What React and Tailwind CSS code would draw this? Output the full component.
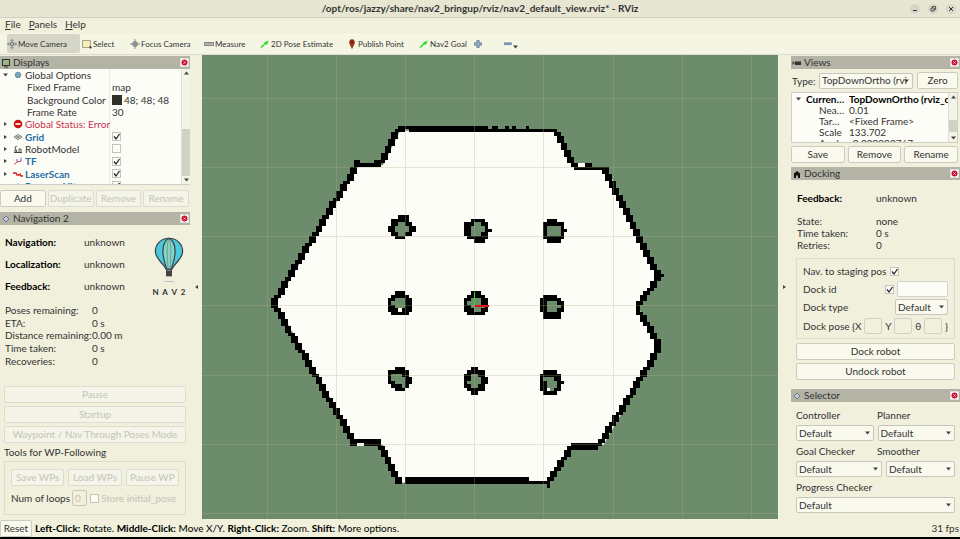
import React, { useState } from 'react'

// Occupancy grid: one cell is 0.05 m
const CELL = 3.45;
const MAP_X = 270.7;
const MAP_Y = 125.5;

// Wall runs: [col1, row1, col2, row2, width in cells]
const walls = [
  [37, 0, 62, 0, 1], [64, 0, 65, 0, 1], [68, 0, 68, 0, 1], [70, 0, 70, 0, 1], [74, 0, 74, 0, 1],
  [36, 1, 38, 1, 1], [40, 1, 82, 1, 1],
  [36, 1, 31, 10, 2], [30, 10, 31, 10, 1], [25, 11, 31, 11, 1], [24, 10, 25, 10, 1],
  [24, 11, 1, 49, 2], [0, 50, 0, 52, 2], [1, 53, 23, 91, 2],
  [23, 91, 31, 91, 1], [23, 92, 24, 92, 1], [27, 92, 31, 92, 1],
  [31, 93, 36, 102, 2], [36, 103, 37, 103, 1],
  [39, 102, 74, 102, 1], [39, 103, 80, 103, 1], [80, 102, 80, 104, 1],
  [80, 102, 86, 93, 2], [87, 92, 95, 92, 1], [86, 93, 94, 93, 1],
  [95, 91, 111, 65, 2], [111, 62, 111, 64, 2],
  [106, 54, 111, 62, 2], [106, 51, 106, 53, 1], [106, 51, 111, 44, 2],
  [111, 42, 111, 44, 2], [113, 43, 113, 43, 1],
  [96, 13, 111, 42, 2], [88, 12, 97, 12, 1], [91, 11, 92, 11, 1],
  [82, 2, 87, 11, 2],
];

const freeOutline = [
  [37, 1], [82, 1], [88, 12], [97, 12], [112, 43], [106, 52], [112, 64], [96, 92], [87, 93],
  [80, 103], [37, 103], [32, 92], [24, 91], [1, 51], [25, 11], [32, 11],
];

const freeSpots = [[35, 3], [35, 4], [89, 11], [90, 11], [25, 92], [26, 92], [108, 56]];

// '#' occupied, '.' unknown, ' ' free
const pillars = [
  { col: 34, row: 26, cells: ["   ###  ", " #####  ", " ##..## ", "##....##", "##....##", " ##..## ", "  ###   "] },
  { col: 56, row: 27, cells: ["  ####  ", "###..## ", "##....# ", "##....##", "##...## ", " ###### ", "   ###  "] },
  { col: 79, row: 27, cells: [" ###   ", "###### ", "#....# ", "#....##", "#....# ", "###### ", " ####  "] },
  { col: 34, row: 48, cells: ["  ###  ", " ##### ", "##...##", "#....##", "##...##", "### ###", " ##### "] },
  { col: 56, row: 48, cells: ["  ###  ", " ##### ", "##...##", "#....##", "##....#", "###..##", " ##### "] },
  { col: 78, row: 49, cells: [" ####  ", "###### ", "##...##", "##....#", "##...##", " ##### ", " ##### "] },
  { col: 34, row: 70, cells: ["  ###  ", "###### ", "#...## ", "#....##", "##...##", " ###.# ", "  ###  "] },
  { col: 56, row: 70, cells: ["  ##   ", " ##### ", "##..## ", "##...##", "#....##", "##..## ", " ##### ", "  ##   "] },
  { col: 78, row: 71, cells: [" ####  ", "###### ", "#...## ", "##...##", "##...# ", "## .## ", " ####  "] },
];

const wallCells = walls.flatMap(([x1, y1, x2, y2, w]) => {
  const steps = Math.max(Math.abs(x2 - x1), Math.abs(y2 - y1));
  return Array.from({ length: steps + 1 }, (_, i) => {
    const t = steps ? i / steps : 0;
    return { col: Math.round(x1 + (x2 - x1) * t), row: Math.round(y1 + (y2 - y1) * t), w };
  });
});

const cx = (col) => MAP_X + col * CELL;
const cy = (row) => MAP_Y + row * CELL;

const MapView = () => (
  <svg viewBox="202 55 576 464" preserveAspectRatio="xMidYMid slice" className="block h-full w-full bg-[#6d8c6c]" role="img" aria-label="Map">
    <polygon fill="#fdfdf8" points={freeOutline.map(([c, r]) => `${cx(c + 0.5)},${cy(r + 0.5)}`).join(' ')} />
    <g shapeRendering="crispEdges">
      {freeSpots.map(([c, r]) => <rect key={`${c}-${r}`} x={cx(c)} y={cy(r)} width={CELL} height={CELL} fill="#fdfdf8" />)}
      {wallCells.map((c, i) => <rect key={i} x={cx(c.col)} y={cy(c.row)} width={CELL * c.w} height={CELL} fill="#000" />)}
      {pillars.map((p, n) => p.cells.map((line, r) => line.split('').map((ch, c) => (
        ch === ' ' ? null : <rect key={`${n}-${r}-${c}`} x={cx(p.col + c)} y={cy(p.row + r)} width={CELL} height={CELL} fill={ch === '#' ? '#000' : '#6d8c6c'} />
      ))))}
    </g>
    <g stroke="#b0b080" strokeOpacity="0.3" shapeRendering="crispEdges">
      {[267, 336, 405, 474, 543, 613, 682, 751].map((x) => <line key={x} x1={x + 0.5} x2={x + 0.5} y1="55" y2="519" />)}
      {[98, 167, 236, 305, 375, 444, 513].map((y) => <line key={y} x1="202" x2="778" y1={y + 0.5} y2={y + 0.5} />)}
    </g>
    <path d="M474.5 292V305" stroke="#1fe01f" />
    <path d="M475 306H489" stroke="#e01010" strokeWidth="2" />
  </svg>
)

const Icon = ({ name }) => {
  const common = { width: 10, height: 10, viewBox: '0 0 10 10', fill: 'none', className: 'shrink-0' };
  switch (name) {
    case 'move':
      return <svg {...common} stroke="#777" ><path d="M5 0.5V9.5M0.5 5H9.5M3.5 2L5 0.5 6.5 2M3.5 8L5 9.5 6.5 8M2 3.5L0.5 5 2 6.5M8 3.5L9.5 5 8 6.5" strokeWidth=".8" /><circle cx="5" cy="5" r="1.8" fill="#bbb" /></svg>;
    case 'select':
      return <svg {...common}><rect x=".5" y="1.5" width="8" height="7" fill="#f5f0b0" stroke="#555" strokeDasharray="1 1" /><path d="M7 7l3 1-1.500 2z" fill="#222" /></svg>;
    case 'focus':
      return <svg {...common} stroke="#888"><circle cx="5" cy="5" r="2.500" fill="#aaa" /><path d="M5 0V10M0 5H10" /></svg>;
    case 'measure':
      return <svg {...common}><rect x=".5" y="3.500" width="9" height="3" fill="#bbb" stroke="#888" /><path d="M2.500 3v2M4.500 3v2M6.500 3v2" stroke="#777" strokeWidth=".6" /></svg>;
    case 'arrow':
      return <svg {...common}><path d="M1 8.500L6 4" stroke="#22dd22" strokeWidth="1.500" /><path d="M4 3.500L8.500 1.500 7 6z" fill="#22dd22" /></svg>;
    case 'pin':
      return <svg {...common}><path d="M5 9.500C4 7 2.500 5.500 2.500 3a2.500 2.500 0 0 1 5 0C7.500 5.500 6 7 5 9.500z" fill="#a33115" stroke="#6b200e" strokeWidth=".5" /><circle cx="5" cy="3" r="1" fill="#5a1608" /></svg>;
    case 'plus':
      return <svg {...common}><path d="M3.800 1.500h2.400v2.300h2.300v2.400H6.200v2.300H3.800V6.200H1.500V3.800h2.300z" fill="#8fa9bb" stroke="#5b7890" strokeWidth=".7" /></svg>;
    case 'minus':
      return <svg {...common}><rect x="1.500" y="3.800" width="7" height="2" fill="#8094b8" stroke="#60759c" strokeWidth=".5" /></svg>;
    case 'monitor':
      return <svg {...common}><rect x="1.500" y="1.500" width="7" height="6" fill="#9bb58a" stroke="#333" /><path d="M3 9h4" stroke="#333" /></svg>;
    case 'diamond':
      return <svg {...common}><path d="M5 2L8 5 5 8 2 5z" stroke="#6b7390" fill="#c5c8cc" /></svg>;
    case 'camera':
      return <svg {...common}><path d="M1 3.500v3M1 5h2" stroke="#333" /><rect x="3" y="3.500" width="6" height="3.500" fill="#333" /></svg>;
    case 'home':
      return <svg {...common}><path d="M5 2L8.500 5H8v4H6V6.500H4V9H2V5H1.500z" fill="#111" /></svg>;
    case 'options':
      return <svg {...common}><circle cx="5" cy="5" r="2.800" fill="#7fa3b5" stroke="#5f9aa5" /></svg>;
    case 'error':
      return <svg {...common}><circle cx="5" cy="5" r="4.300" fill="#cc1414" /><path d="M2.500 5h5" stroke="#fff" strokeWidth="1.600" /></svg>;
    case 'grid':
      return <svg {...common}><path d="M5 2.500L9 5 5 7.500 1 5zM3 3.700l4 2.600M7 3.700L3 6.300" stroke="#777" /></svg>;
    case 'robot':
      return <svg {...common}><path d="M1 8.500h8" stroke="#444" /><path d="M2 8V6h1.500v2M2.500 6L2 3l2-1M6 8V5h2v3" stroke="#444" strokeWidth=".9" /></svg>;
    case 'tf':
      return <svg {...common} strokeWidth=".9"><path d="M1 8.500L4 6 8.500 5" stroke="#c33" /><path d="M4 6V3M8 5V1.500" stroke="#55c" /></svg>;
    case 'laser':
      return <svg {...common}><path d="M0 4h3l1 2h2l1-1 1 2h2" stroke="#d01818" strokeWidth="1.300" /></svg>;
    case 'cloud':
      return <svg {...common}><path d="M3 5l2-3 2 3z" fill="#3aa" /></svg>;
    default:
      return null;
  }
}

const Caret = ({ dir = 'down', className = '' }) => (
  <svg width="5" height="4" viewBox="0 0 5 4" fill="#444" className={`shrink-0 ${className}`}>
    <path d={dir === 'down' ? 'M0 .5h5L2.500 3.500z' : dir === 'up' ? 'M0 3.500h5L2.500 .5z' : dir === 'left' ? 'M4 0v4L1 2z' : 'M1 0v4L4 2z'} />
  </svg>
)

const Button = ({ children, disabled, className = '' }) => (
  <button type="button" disabled={disabled} className={`h-[17px] overflow-hidden rounded-xs border pb-px text-center whitespace-nowrap ${disabled ? 'border-[#dcdcd0] bg-[#f4f4e8] text-[#c4c4b8]' : 'border-[#cbcbc0] bg-[#f9f9ee] text-[#333]'} ${className}`}>
    {children}
  </button>
)

const Select = ({ label, value, className = '' }) => (
  <span className={`relative flex h-4 items-center ${className}`}>
    <select aria-label={label} className="h-full w-full appearance-none rounded-xs border border-[#c6c6bc] bg-[#f9f9ee] pb-px pl-[2px]">
      <option>{value}</option>
    </select>
    <Caret className="pointer-events-none absolute right-1" />
  </span>
)

const Check = ({ label, on, disabled }) => {
  const [checked, setChecked] = useState(on);
  return (
    <span className="relative flex size-[9px] shrink-0">
      <input type="checkbox" aria-label={label} checked={checked} disabled={disabled} onChange={() => setChecked(!checked)} className="size-[9px] appearance-none border border-[#c4c4b8] bg-[#fdfdf8]" />
      {checked && <svg viewBox="0 0 9 9" className="pointer-events-none absolute inset-0" fill="none" stroke="#223" strokeWidth="1.300"><path d="M2 4.500L4 7 7.500 2" /></svg>}
    </span>
  )
}

const PanelTitle = ({ icon, children }) => (
  <div className="flex h-[13px] items-center bg-[#b4b4a6] pl-px">
    <Icon name={icon} />
    <h2 className="ml-[2px] flex-1 pb-[2px]">{children}</h2>
    <button type="button" aria-label={`Close ${children}`} className="mr-px flex size-[9px] items-center justify-center border border-[#ddd] bg-white">
      <svg width="7" height="7" viewBox="0 0 7 7"><circle cx="3.500" cy="3.500" r="3" fill="#c8102e" /><path d="M2.500 2.500l2 2m0-2l-2 2" stroke="#fff" strokeWidth=".8" /></svg>
    </button>
  </div>
)

const ScrollBar = ({ thumb }) => (
  <div className="flex w-[9px] shrink-0 flex-col items-center justify-between border-l border-[#e0e0d6] bg-[#f3f3e8] py-[2px]">
    <Caret dir="up" />
    <div className={`w-full bg-[#d2d2c4] ${thumb}`}></div>
    <Caret />
  </div>
)

const displays = [
  { icon: 'options', name: 'Global Options', arrow: 'down' },
  { name: 'Fixed Frame', value: 'map' },
  { name: 'Background Color', value: '48; 48; 48', swatch: true },
  { name: 'Frame Rate', value: '30' },
  { icon: 'error', name: 'Global Status: Error', arrow: 'right', style: 'text-[#c8324a]' },
  { icon: 'grid', name: 'Grid', arrow: 'right', style: 'font-bold text-[#256fa5]', check: true },
  { icon: 'robot', name: 'RobotModel', arrow: 'right', check: false },
  { icon: 'tf', name: 'TF', arrow: 'right', style: 'font-bold text-[#256fa5]', check: true },
  { icon: 'laser', name: 'LaserScan', arrow: 'right', style: 'font-bold text-[#256fa5]', check: true },
  { icon: 'cloud', name: 'Bumper Hit', arrow: 'right', style: 'font-bold text-[#256fa5]', check: true },
];

const DisplaysPanel = () => (
  <section>
    <PanelTitle icon="monitor">Displays</PanelTitle>
    <div className="flex h-[116px] overflow-hidden border-b border-[#cfcfc4] bg-[#fdfdf8]">
      <div className="grid h-[123px] flex-1 auto-rows-fr">
        {displays.map((d) => (
          <div key={d.name} className="flex min-h-0 items-center">
            <div className="flex h-full w-[110px] items-center border-r border-[#ebebe0] whitespace-nowrap">
              {d.arrow ? <Caret dir={d.arrow} className="mr-[5px] ml-[3px]" /> : <span className="w-[27px]"></span>}
              {d.icon && <span className="mr-[2px]"><Icon name={d.icon} /></span>}
              <span className={d.style}>{d.name}</span>
            </div>
            <div className="flex items-center gap-[2px] pl-[2px]">
              {d.swatch && <span className="size-[10px] bg-[#303028]"></span>}
              {d.check !== undefined && <Check label={d.name} on={d.check} />}
              {d.value}
            </div>
          </div>
        ))}
      </div>
      <ScrollBar thumb="mt-[54px] mb-[2px] flex-1" />
    </div>
    <div className="flex gap-[2px] pt-[5px] pr-px">
      <Button className="flex-1">Add</Button>
      <Button disabled className="flex-1">Duplicate</Button>
      <Button disabled className="flex-1">Remove</Button>
      <Button disabled className="flex-1">Rename</Button>
    </div>
  </section>
)

const Balloon = () => (
  <svg width="30" height="42" viewBox="0 0 32 42" fill="none" stroke="#38434a" strokeWidth="1.300">
    <path d="M16 1C7.500 1 1.500 7.500 1.500 15c0 8 8 12 11.500 19h6c3.500-7 11.500-11 11.500-19C30.500 7.500 24.500 1 16 1z" fill="#4cc8dc" />
    <path d="M16 1c-4 2-6.500 7-6.500 14 0 8 2.500 13 4 19h5c1.500-6 4-11 4-19 0-7-2.500-12-6.500-14z" fill="#86d6c4" />
    <path d="M16 1c-1.500 3-2 8-2 14s.5 13 1 19M16 1c1.500 3 2 8 2 14s-.5 13-1 19" strokeWidth=".4" />
    <rect x="13.500" y="36" width="5" height="5" fill="#4a4038" />
    <path d="M13.500 34v3M18.500 34v3" />
  </svg>
)

const states = ['Navigation', 'Localization', 'Feedback'];
const progress = [
  ['Poses remaining:', '0'],
  ['ETA:', '0 s'],
  ['Distance remaining:', '0.00 m'],
  ['Time taken:', '0 s'],
  ['Recoveries:', '0'],
];

const NavigationPanel = () => (
  <section className="mt-[5px]">
    <PanelTitle icon="diamond">Navigation 2</PanelTitle>
    <div className="flex pt-[6px] pl-[5px]">
      <dl className="w-[145px]">
        {states.map((s) => (
          <div key={s} className="flex h-[22px] items-center">
            <dt className="w-[79px] font-bold text-black">{s}:</dt>
            <dd>unknown</dd>
          </div>
        ))}
      </dl>
      <div className="flex w-[38px] flex-col items-center pt-[5px]">
        <Balloon />
        <span className="mt-[3px] h-px w-[10px] bg-[#c0c0c4]"></span>
        <span className="mt-1 flex w-[33px] justify-between text-[8px] leading-3 font-bold"><span>N</span><span>A</span><span>V</span><span>2</span></span>
      </div>
    </div>
    <dl className="mt-[6px] grid h-[63px] auto-rows-fr pl-[5px]">
      {progress.map(([name, value]) => (
        <div key={name} className="flex items-center whitespace-nowrap">
          <dt className="w-[87px]">{name}</dt>
          <dd>{value}</dd>
        </div>
      ))}
    </dl>
    <div className="mt-[19px] flex flex-col gap-[3px] px-1">
      <Button disabled>Pause</Button>
      <Button disabled>Startup</Button>
      <Button disabled>Waypoint / Nav Through Poses Mode</Button>
      <h3 className="leading-3">Tools for WP-Following</h3>
      <div className="border border-[#dcdcd0] px-[6px] pt-[7px] pb-2">
        <div className="flex gap-1">
          <Button disabled className="flex-1">Save WPs</Button>
          <Button disabled className="flex-1">Load WPs</Button>
          <Button disabled className="flex-1">Pause WP</Button>
        </div>
        <div className="mt-1 flex items-center whitespace-nowrap">
          <label htmlFor="loops" className="w-[61px]">Num of loops</label>
          <input id="loops" disabled defaultValue="0" className="h-4 w-[15px] rounded-xs border border-[#c8c8be] pl-[2px] text-[#c4c4b8]" />
          <label className="ml-[3px] flex items-center gap-[2px] text-[#c4c4b8]">
            <Check label="Store initial_pose" on={false} disabled />
            Store initial_pose
          </label>
        </div>
      </div>
    </div>
  </section>
)

const views = [
  ['Nea…', '0.01'],
  ['Tar…', '<Fixed Frame>'],
  ['Scale', '133.702'],
  ['Angle', '-0.000000767'],
];

const ViewsPanel = () => (
  <section>
    <PanelTitle icon="camera">Views</PanelTitle>
    <div className="flex h-[23px] items-center pr-[2px] pl-px">
      <span className="w-[27px]">Type:</span>
      <Select label="Type" value="TopDownOrtho (rvi" className="mr-1 min-w-0 flex-1" />
      <Button className="w-[41px]">Zero</Button>
    </div>
    <div className="mr-[2px] flex h-[51px] overflow-hidden border border-[#cfcfc4] bg-[#fdfdf8]">
      <div className="grid h-[55px] min-w-0 flex-1 auto-rows-fr">
        <div className="flex min-h-0 items-center font-bold whitespace-nowrap text-black">
          <Caret className="mr-[5px] ml-1" />
          <span className="w-[43px]">Curren…</span>
          <span>TopDownOrtho (rviz_d.</span>
        </div>
        {views.map(([name, value]) => (
          <div key={name} className="flex min-h-0 items-center whitespace-nowrap">
            <span className="ml-[27px] w-[30px]">{name}</span>
            <span>{value}</span>
          </div>
        ))}
      </div>
      <ScrollBar thumb="mt-4 h-3" />
    </div>
    <div className="flex gap-[3px] pt-[3px] pr-[2px]">
      <Button className="flex-1">Save</Button>
      <Button className="flex-1">Remove</Button>
      <Button className="flex-1">Rename</Button>
    </div>
  </section>
)

const DockingPanel = () => (
  <section className="mt-1">
    <PanelTitle icon="home">Docking</PanelTitle>
    <dl className="px-[6px] pt-3">
      <div className="mb-[11px] flex h-3 items-center">
        <dt className="w-[79px] font-bold text-black">Feedback:</dt>
        <dd>unknown</dd>
      </div>
      {[['State:', 'none'], ['Time taken:', '0 s'], ['Retries:', '0']].map(([name, value]) => (
        <div key={name} className="flex h-3 items-center">
          <dt className="w-[79px]">{name}</dt>
          <dd>{value}</dd>
        </div>
      ))}
    </dl>
    <div className="mt-[7px] flex flex-col gap-[3px] px-[5px]">
      <div className="mb-px flex flex-col gap-[2px] border border-[#dcdcd0] px-[6px] py-1 whitespace-nowrap">
        <div className="flex h-4 items-center">
          <span className="mr-1 min-w-[78px]">Nav. to staging pos</span>
          <Check label="Nav. to staging pose" on />
        </div>
        <div className="flex h-4 items-center">
          <label htmlFor="dock-id" className="mr-1 w-[78px]">Dock id</label>
          <Check label="Use dock id" on />
          <input id="dock-id" className="ml-[3px] h-4 min-w-0 flex-1 rounded-xs border border-[#d4d4ca] bg-[#fdfdf8]" />
        </div>
        <div className="flex h-4 items-center justify-between">
          <span>Dock type</span>
          <Select label="Dock type" value="Default" className="w-[53px]" />
        </div>
        <div className="flex h-[17px] items-center justify-between">
          <span>Dock pose {'{'}X</span>
          <input aria-label="X" disabled className="h-4 w-[18px] rounded-xs border border-[#d0d0c6]" />
          <span>Y</span>
          <input aria-label="Y" disabled className="h-4 w-[18px] rounded-xs border border-[#d0d0c6]" />
          <span>θ</span>
          <input aria-label="θ" disabled className="h-4 w-[18px] rounded-xs border border-[#d0d0c6]" />
          <span>{'}'}</span>
        </div>
      </div>
      <Button>Dock robot</Button>
      <Button>Undock robot</Button>
    </div>
  </section>
)

const SelectorPanel = () => (
  <section className="mt-[9px]">
    <PanelTitle icon="diamond">Selector</PanelTitle>
    <div className="flex flex-col px-[5px] pt-[3px]">
      <div className="flex h-5 items-center">
        <span className="w-[81px]">Controller</span>
        <span>Planner</span>
      </div>
      <div className="flex gap-1">
        <Select label="Controller" value="Default" className="flex-1" />
        <Select label="Planner" value="Default" className="flex-1" />
      </div>
      <div className="flex h-5 items-center">
        <span className="w-[81px]">Goal Checker</span>
        <span>Smoother</span>
      </div>
      <div className="flex gap-1">
        <Select label="Goal Checker" value="Default" className="w-[86px]" />
        <Select label="Smoother" value="Default" className="flex-1" />
      </div>
      <span className="flex h-5 items-center">Progress Checker</span>
      <Select label="Progress Checker" value="Default" />
    </div>
  </section>
)

const tools = [
  { icon: 'move', name: 'Move Camera', width: 'w-[73px]' },
  { icon: 'select', name: 'Select', width: 'w-[46px]' },
  { icon: 'focus', name: 'Focus Camera', width: 'w-[72px]' },
  { icon: 'measure', name: 'Measure', width: 'w-[54px]' },
  { icon: 'arrow', name: '2D Pose Estimate', width: 'w-[85px]' },
  { icon: 'pin', name: 'Publish Point', width: 'w-[70px]' },
  { icon: 'arrow', name: 'Nav2 Goal', width: 'w-[54px]' },
];

const App = () => {
  return (
    <div className='flex h-screen flex-col overflow-hidden bg-[#f0f0dc] font-["Lato","Noto_Sans",sans-serif] text-[10px] leading-3 text-[#333]'>
      {/* TITLE BAR */}
      <header className="relative flex h-[18px] shrink-0 items-center justify-center border-b border-[#cfcfc4] bg-[#e6e6d2]">
        <h1 className="pb-px font-bold">/opt/ros/jazzy/share/nav2_bringup/rviz/nav2_default_view.rviz* - RViz</h1>
        <div className="absolute right-1 flex gap-2 text-[#333]">
          <button type="button" aria-label="Minimize" className="flex size-[10px] items-center justify-center rounded-full bg-[#d6d6c8]"><svg width="6" height="6" viewBox="0 0 6 6" stroke="currentColor"><path d="M1 4.500h4" /></svg></button>
          <button type="button" aria-label="Restore" className="flex size-[10px] items-center justify-center rounded-full bg-[#d6d6c8]"><svg width="6" height="6" viewBox="0 0 6 6" fill="none" stroke="currentColor" strokeWidth=".8"><path d="M1 2h3v3H1zM2.500 2V.5H5.500V3.500H4" /></svg></button>
          <button type="button" aria-label="Close" className="flex size-[10px] items-center justify-center rounded-full bg-[#d6d6c8]"><svg width="6" height="6" viewBox="0 0 6 6" stroke="currentColor"><path d="M1 1l4 4m0-4L1 5" /></svg></button>
        </div>
      </header>

      {/* MENU */}
      <nav className="flex h-[15px] shrink-0 items-start gap-2 pl-[5px]">
        {['File', 'Panels', 'Help'].map((item) => (
          <button key={item} type="button"><span className="underline">{item[0]}</span>{item.slice(1)}</button>
        ))}
      </nav>

      {/* TOOLBAR */}
      <div className="flex h-[22px] shrink-0 items-center border-b border-[#dcdcd0] bg-[#f5f5e4] pl-[7px] text-[8px]">
        <div className="flex gap-[2px]">
          {tools.map((tool, i) => (
            <button key={tool.name} type="button" className={`flex h-[19px] items-center gap-px rounded-xs whitespace-nowrap ${tool.width} ${i === 0 ? 'bg-[#d6d6c8]' : ''}`}>
              <Icon name={tool.icon} />{tool.name}
            </button>
          ))}
        </div>
        <button type="button" aria-label="Add tool"><Icon name="plus" /></button>
        <button type="button" aria-label="Remove tool" className="ml-5 flex items-end"><Icon name="minus" /><Caret /></button>
      </div>

      <main className="flex min-h-0 flex-1">
        <aside className="w-[190px] shrink-0 pt-px">
          <DisplaysPanel />
          <NavigationPanel />
        </aside>
        <div className="flex w-3 shrink-0 items-center justify-center"><Caret dir="left" /></div>
        <div className="min-w-0 flex-1"><MapView /></div>
        <div className="flex w-[13px] shrink-0 items-center justify-center"><Caret dir="right" /></div>
        <aside className="w-[169px] shrink-0 pt-px">
          <ViewsPanel />
          <DockingPanel />
          <SelectorPanel />
        </aside>
      </main>

      {/* STATUS BAR */}
      <footer className="flex h-[20px] shrink-0 items-center border-b-2 border-black pr-px">
        <Button className="w-8">Reset</Button>
        <p className="ml-[3px] flex-1 text-black"><b>Left-Click:</b> Rotate. <b>Middle-Click:</b> Move X/Y. <b>Right-Click:</b> Zoom. <b>Shift:</b> More options.</p>
        <span>31 fps</span>
      </footer>
    </div>
  )
}

export default App
